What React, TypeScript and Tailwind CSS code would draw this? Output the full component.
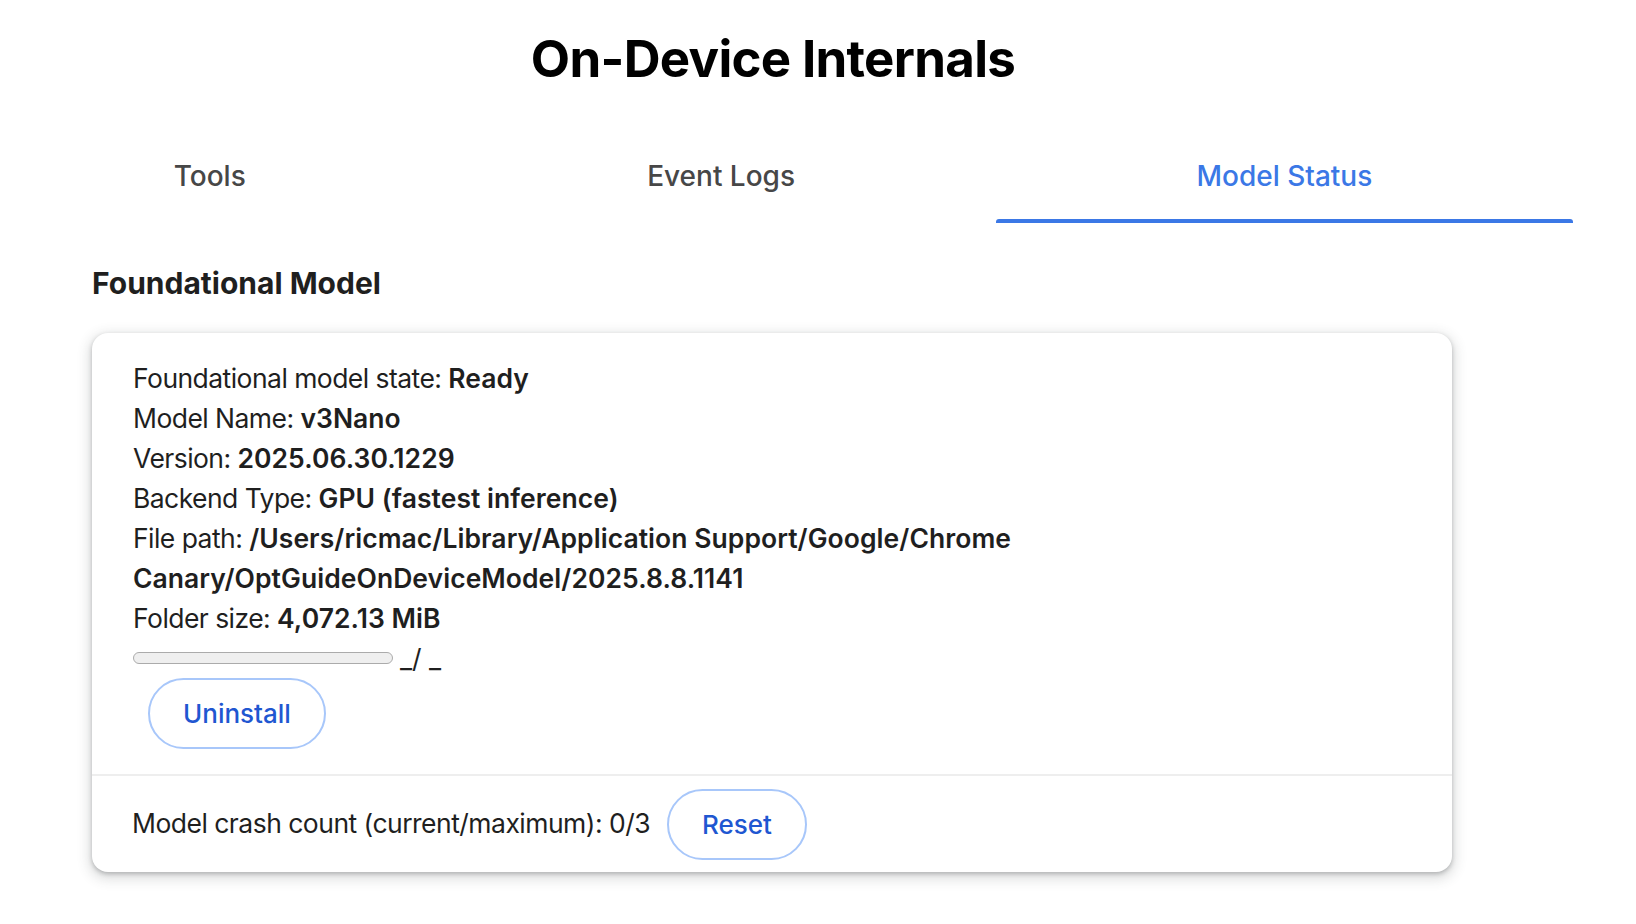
import React from "react";

function Line({ label, value }: { label?: string; value: React.ReactNode }) {
  return (
    <div className="h-[40px] leading-[40px] whitespace-nowrap">
      {label ? <span className="tracking-[-0.55px]">{label} </span> : null}
      <span className="font-semibold tracking-[0.05px]">{value}</span>
    </div>
  );
}

export default function App() {
  return (
    <div className="w-full h-[924px] overflow-hidden bg-white font-['Inter','Liberation_Sans',sans-serif] text-[#1f1f1f]">
      <div className="w-[1600px] -ml-[27px]">
        <h1 className="pt-[33px] text-center text-[51px] leading-[51px] font-bold text-black tracking-[-0.7px]">
          On-Device Internals
        </h1>
        <div className="mt-[78px] flex">
          <div className="flex-auto flex flex-col items-center">
            <div className="h-[29px] leading-[29px] text-[28px] font-medium text-[#474747] px-2">Tools</div>
            <div className="mt-[28px] h-[4px] w-full" />
          </div>
          <div className="flex-auto flex flex-col items-center">
            <div className="h-[29px] leading-[29px] text-[28px] font-medium text-[#474747] px-2">Event Logs</div>
            <div className="mt-[28px] h-[4px] w-full" />
          </div>
          <div className="flex-auto flex flex-col items-center">
            <div className="h-[29px] leading-[29px] text-[28px] font-medium text-[#3b78e6] px-2">Model Status</div>
            <div className="mt-[28px] h-[4px] w-full bg-[#3b78e6] rounded-t-[3px]" />
          </div>
        </div>
        <div className="pl-[119px]">
          <h2 className="mt-[45px] text-[30px] leading-[30px] font-bold text-[#1f1f1f]">Foundational Model</h2>
          <div className="mt-[35px] w-[1360px] rounded-[16px] bg-white shadow-[0_2px_4px_rgba(60,64,67,0.3),0_4px_12px_4px_rgba(60,64,67,0.15)]">
            <div className="pt-[25px] pb-[25px] pl-[41px] text-[26.5px]">
              <Line label="Foundational model state:" value="Ready" />
              <Line label="Model Name:" value="v3Nano" />
              <Line label="Version:" value="2025.06.30.1229" />
              <Line label="Backend Type:" value="GPU (fastest inference)" />
              <Line label="File path:" value="/Users/ricmac/Library/Application Support/Google/Chrome" />
              <Line value="Canary/OptGuideOnDeviceModel/2025.8.8.1141" />
              <Line label="Folder size:" value="4,072.13 MiB" />
              <div className="h-[40px] flex items-center gap-[7px]">
                <div className="w-[260px] h-[12px] rounded-full bg-[#efefef] border-[1.5px] border-[#ababab]" />
                <span className="leading-[40px]">_/ _</span>
              </div>
              <button className="ml-[15px] h-[71px] px-[33px] rounded-full border-2 border-[#a8c7fa] text-[26px] font-medium text-[#1f57d1]">
                Uninstall
              </button>
            </div>
            <div className="h-[2px] bg-[#eeeeee]" />
            <div className="h-[96px] flex items-center pl-[40px] text-[26.5px]">
              <span className="tracking-[-0.52px]">Model crash count (current/maximum): 0/3</span>
              <button className="ml-[17px] h-[71px] px-[33px] rounded-full border-2 border-[#a8c7fa] text-[26px] font-medium text-[#1f57d1]">
                Reset
              </button>
            </div>
          </div>
        </div>
      </div>
    </div>
  );
}
